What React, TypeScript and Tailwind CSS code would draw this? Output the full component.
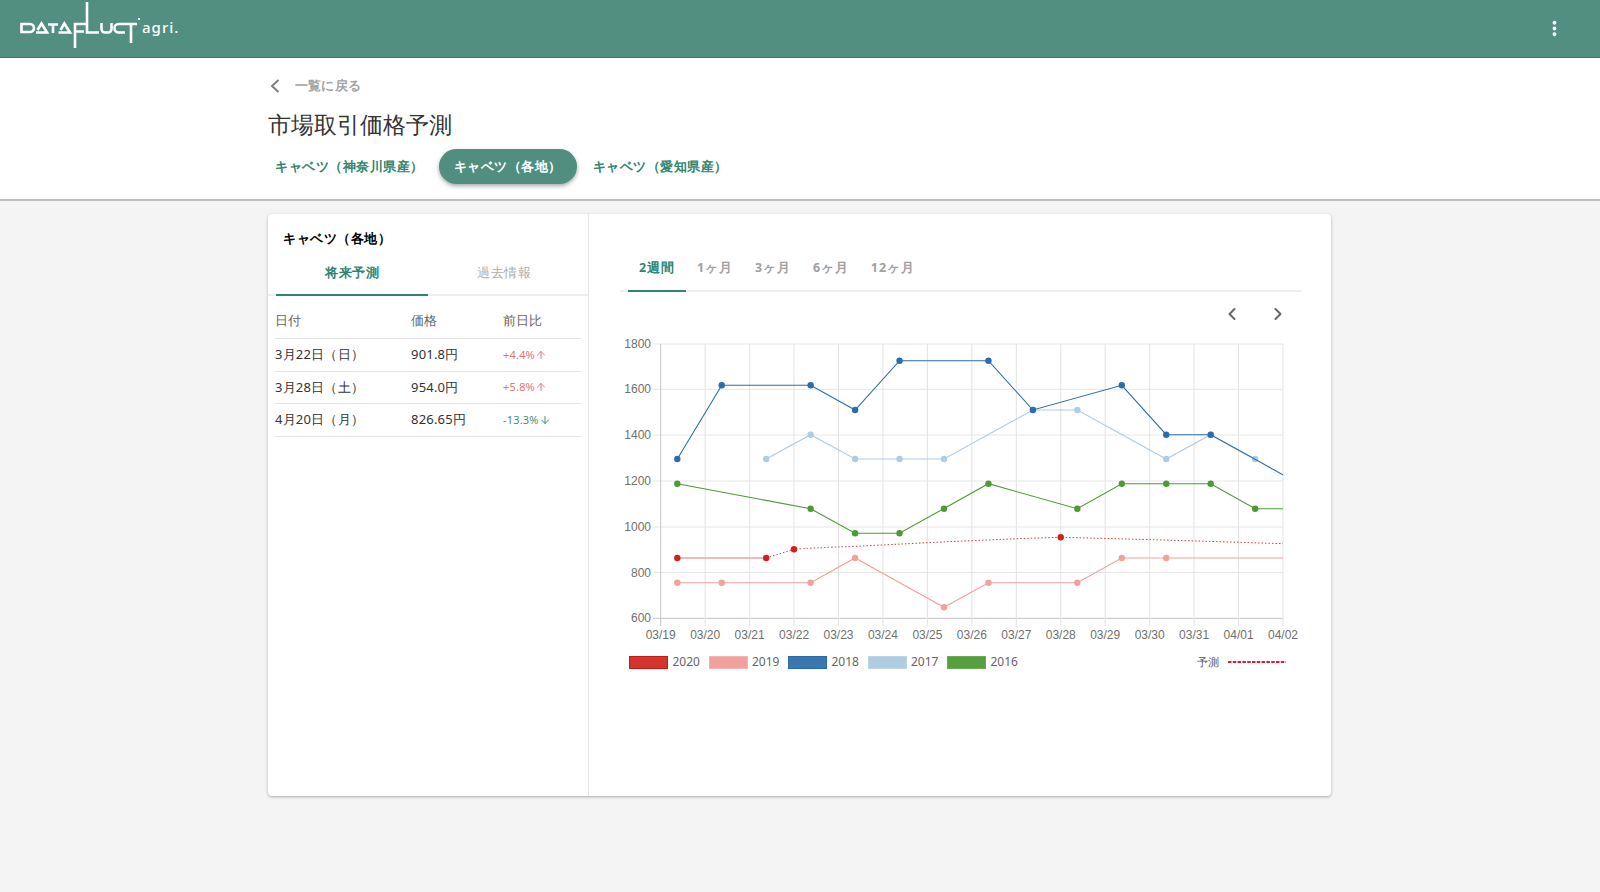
import React from "react";
import { ArrowDown, ArrowUp, ChevronLeft, ChevronRight } from "lucide-react";

type Pt = [number, number];

// page coordinates are used for the chart, see the viewBox on the svg
const stepX = 44.45;
const px = (i: number) => 677.3 + stepX * i;

const series: { color: string; line: Pt[]; dots: Pt[] }[] = [
  {
    color: "#aecde2",
    line: [[px(2), 459], [px(3), 434.7], [px(4), 459], [px(6), 459], [px(8), 410], [px(9), 410], [px(11), 459], [px(12), 434.7], [px(13), 459]],
    dots: [[px(2), 459], [px(3), 434.7], [px(4), 459], [px(5), 459], [px(6), 459], [px(8), 410], [px(9), 410], [px(11), 459], [px(12), 434.7], [px(13), 459]],
  },
  {
    color: "#2b6cab",
    line: [[px(0), 459], [px(1), 385.3], [px(3), 385.3], [px(4), 410], [px(5), 360.7], [px(7), 360.7], [px(8), 410], [px(10), 385.3], [px(11), 434.7], [px(12), 434.7], [px(14), 484]],
    dots: [[px(0), 459], [px(1), 385.3], [px(3), 385.3], [px(4), 410], [px(5), 360.7], [px(7), 360.7], [px(8), 410], [px(10), 385.3], [px(11), 434.7], [px(12), 434.7]],
  },
  {
    color: "#4c9b33",
    line: [[px(0), 483.7], [px(3), 508.7], [px(4), 533.3], [px(5), 533.3], [px(7), 483.7], [px(9), 508.7], [px(10), 483.7], [px(12), 483.7], [px(13), 508.7], [1283, 508.7]],
    dots: [[px(0), 483.7], [px(3), 508.7], [px(4), 533.3], [px(5), 533.3], [px(6), 508.7], [px(7), 483.7], [px(9), 508.7], [px(10), 483.7], [px(11), 483.7], [px(12), 483.7], [px(13), 508.7]],
  },
  {
    color: "#f2a19d",
    line: [[px(0), 582.7], [px(3), 582.7], [px(4), 558], [px(6), 607.3], [px(7), 582.7], [px(9), 582.7], [px(10), 558], [1283, 558]],
    dots: [[px(0), 582.7], [px(1), 582.7], [px(3), 582.7], [px(4), 558], [px(6), 607.3], [px(7), 582.7], [px(9), 582.7], [px(10), 558], [px(11), 558]],
  },
  {
    color: "#e8a3a3",
    line: [[px(0), 558], [px(2), 558]],
    dots: [],
  },
];

const redDots: Pt[] = [[px(0), 558], [px(2), 558], [794, 549.3], [1060.7, 537.3]];

const yTicks: [string, number][] = [
  ["1800", 344],
  ["1600", 389.3],
  ["1400", 435],
  ["1200", 481],
  ["1000", 527],
  ["800", 572.5],
  ["600", 618.3],
];

const xLabels = ["03/19", "03/20", "03/21", "03/22", "03/23", "03/24", "03/25", "03/26", "03/27", "03/28", "03/29", "03/30", "03/31", "04/01", "04/02"];

const legend = [
  { year: "2020", box: "bg-[#d4352c] border-[#c8181a]" },
  { year: "2019", box: "bg-[#f2a09c] border-[#f4b4b0]" },
  { year: "2018", box: "bg-[#3b76ad] border-[#2a6cab]" },
  { year: "2017", box: "bg-[#aecde1] border-[#bcd6e8]" },
  { year: "2016", box: "bg-[#559f3e] border-[#6aab55]" },
];

const rows = [
  { date: "3月22日（日）", price: "901.8円", diff: "+4.4%", up: true },
  { date: "3月28日（土）", price: "954.0円", diff: "+5.8%", up: true },
  { date: "4月20日（月）", price: "826.65円", diff: "-13.3%", up: false },
];

const Logo = () => (
  <svg width="124" height="58" viewBox="15 0 124 58" fill="none" stroke="white" strokeWidth="2.6" className="ml-[15px]">
    <path d="M21.5 32V24H30a4 4 0 0 1 0 8Z" />
    <path d="M36 32.5H47L41.5 23.5L37.5 30" />
    <path d="M48 24.5H58M53 24.5V33" />
    <path d="M58.5 32.5H70L64.3 23.5L60.5 30" />
    <path d="M75 48V24H87M75 31.5H84" />
    <path d="M87 2V32.5H99" />
    <path d="M101.500 23V29a3.500 3.500 0 0 0 3.500 3.500H108a3.500 3.500 0 0 0 3.500-3.500V23" />
    <path d="M125 24H118.500a4 4 0 0 0-4 4V28.500a4 4 0 0 0 4 4H125" />
    <path d="M125 24H137M131 24V43" />
  </svg>
);

const Chart = () => (
  <svg width="680" height="316" viewBox="620 330 680 316" className="block">
    {yTicks.map(([label, y]) => (
      <g key={label}>
        <line x1="653" x2="1283" y1={y} y2={y} stroke={y === 618.3 ? "#c4c4c4" : "#e6e6e6"} />
        <text x="651" y={y + 4} textAnchor="end" fontSize="12" fill="#707070" fontFamily="Liberation Sans, sans-serif">
          {label}
        </text>
      </g>
    ))}
    {xLabels.map((label, i) => {
      const x = 660.7 + stepX * i;
      return (
        <g key={label}>
          <line x1={x} x2={x} y1="344" y2="626" stroke={i === 0 ? "#c4c4c4" : "#e3e3e3"} />
          <text x={x} y="639" textAnchor="middle" fontSize="12" fill="#707070" fontFamily="Liberation Sans, sans-serif">
            {label}
          </text>
        </g>
      );
    })}
    <svg x="620" y="330" width="663" height="316" viewBox="620 330 663 316">
      {series.map((s, n) => (
        <g key={n}>
          <polyline points={s.line.map((p) => p.join(",")).join(" ")} fill="none" stroke={s.color} strokeWidth={n === 4 ? 1.6 : 1.1} />
          {s.dots.map((p, i) => (
            <circle key={i} cx={p[0]} cy={p[1]} r="3.2" fill={s.color} />
          ))}
        </g>
      ))}
      <path
        d="M766.3 558L794 549.3Q810 547.8 855 546.4C930 542.5 1000 539 1060.7 537.3C1130 539 1200 541 1283 543.700"
        fill="none"
        stroke="#dc3a3a"
        strokeWidth="1"
        strokeDasharray="1.5 2"
      />
      {redDots.map((p, i) => (
        <circle key={i} cx={p[0]} cy={p[1]} r="3.2" fill="#d41f1f" />
      ))}
    </svg>
  </svg>
);

export default function App() {
  return (
    <div className="min-h-[892px] bg-[#f4f4f4] font-['Roboto','Noto_Sans_CJK_JP',sans-serif]">
      <header className="flex h-[58px] items-center justify-between border-b border-[#2f7d6b] bg-[#528f80] pr-[34px]">
        <div className="flex items-center">
          <Logo />
          <span className="relative ml-[3px] mt-[-2px] text-[15px] font-medium tracking-[1px] text-white before:absolute before:left-[-4px] before:top-[2px] before:h-[2px] before:w-[2px] before:bg-white">
            agri.
          </span>
        </div>
        <svg width="23" height="23" viewBox="0 0 24 24" fill="white">
          <path d="M12 8c1.100 0 2-.9 2-2s-.9-2-2-2-2 .9-2 2 .9 2 2 2zm0 2c-1.100 0-2 .9-2 2s.9 2 2 2 2-.9 2-2-.9-2-2-2zm0 6c-1.100 0-2 .9-2 2s.9 2 2 2 2-.9 2-2-.9-2-2-2z" />
        </svg>
      </header>

      <div className="h-[143px] border-b-2 border-[#bdbdbd] bg-white pl-[268px]">
        <div className="flex h-[56px] items-center text-[13px] font-bold tracking-[0.2px] text-[#a3a3a3]">
          <svg width="10" height="14" viewBox="0 0 10 14" fill="none" stroke="#808080" strokeWidth="2" className="ml-[2px]">
            <path d="M8.500 1L2 7L8.500 13" />
          </svg>
          <span className="ml-[15px]">一覧に戻る</span>
        </div>
        <h1 className="mt-[-2px] h-[24px] text-[23px] font-light leading-[24px] text-[#333]">市場取引価格予測</h1>
        <div className="mt-[13px] flex items-center gap-[8px] text-[13px] font-bold tracking-[0.5px]">
          <button className="h-[35px] px-[7px] text-[#2f8570]">キャベツ（神奈川県産）</button>
          <button className="h-[35px] rounded-full bg-[#508e7f] px-[15px] text-white shadow-[0_2px_4px_rgba(0,0,0,0.35)]">キャベツ（各地）</button>
          <button className="h-[35px] px-2 text-[#2f8570]">キャベツ（愛知県産）</button>
        </div>
      </div>

      <main className="ml-[268px] mt-[13px] flex h-[582px] w-[1063px] rounded bg-white shadow-[0_1px_3px_rgba(0,0,0,0.3)]">
        <section className="w-[321px] border-r border-[#e6e6e6]">
          <h2 className="pl-[15px] pt-[15px] text-[13px] font-bold leading-[18px] tracking-[0.5px] text-black">キャベツ（各地）</h2>
          <div className="mt-[3px] flex h-[46px] border-b-2 border-[#eeeeee] px-[8px] text-[13px] tracking-[0.5px]">
            <div className="flex h-[46px] w-[152px] items-center justify-center border-b-2 border-[#2f8570] pt-[1px] font-bold text-[#2f8570]">将来予測</div>
            <div className="flex h-[46px] w-[152px] items-center justify-center text-[#adadad]">過去情報</div>
          </div>
          <div className="pl-[7px] pr-[7px]">
            <div className="flex h-[43px] items-center border-b border-[#e4e4e4] pt-[7px] text-[13px] text-[#666]">
              <span className="w-[136px]">日付</span>
              <span className="w-[92px]">価格</span>
              <span>前日比</span>
            </div>
            {rows.map((r) => (
              <div key={r.date} className="flex h-[32.6px] items-center border-b border-[#e4e4e4] text-[13px] tracking-[0.2px] text-[#333]">
                <span className="w-[136px]">{r.date}</span>
                <span className="w-[92px]">{r.price}</span>
                <span className={`flex items-center text-[11px] ${r.up ? "text-[#e57373]" : "text-[#3f8f7b]"}`}>
                  {r.diff}
                  {r.up ? <ArrowUp size={12} /> : <ArrowDown size={12} />}
                </span>
              </div>
            ))}
          </div>
        </section>

        <section className="flex-1 pl-[31px] pt-[31px]">
          <div className="flex h-[47px] w-[681px] border-b-2 border-[#eeeeee] pl-[8px] text-[12.5px] font-bold tracking-[1px] text-[#a0a0a0]">
            <div className="flex h-[47px] w-[58px] items-center justify-center border-b-2 border-[#2f8570] pt-[1px] text-[#2f8570]">2週間</div>
            <div className="flex h-[45px] w-[58px] items-center justify-center pt-[2px]">1ヶ月</div>
            <div className="flex h-[45px] w-[58px] items-center justify-center pt-[2px]">3ヶ月</div>
            <div className="flex h-[45px] w-[58px] items-center justify-center pt-[2px]">6ヶ月</div>
            <div className="flex h-[45px] w-[66px] items-center justify-center pt-[2px]">12ヶ月</div>
          </div>
          <div className="flex h-[38px] w-[668px] items-center justify-end gap-[26px] pt-[6px] text-[#666]">
            <ChevronLeft size={20} strokeWidth={2.4} />
            <ChevronRight size={20} strokeWidth={2.4} />
          </div>
          <Chart />
          <div className="mt-[6px] flex h-[20px] w-[666px] items-center justify-between pl-[9px] font-['Liberation_Sans',sans-serif] text-[12px] text-[#666]">
            <div className="flex items-center gap-[10px]">
              {legend.map((l) => (
                <div key={l.year} className="flex items-center gap-[4.500px]">
                  <span className={`h-[13px] w-[39px] border ${l.box}`} />
                  <span className="w-[26px]">{l.year}</span>
                </div>
              ))}
            </div>
            <div className="flex items-center gap-[9px] font-['Noto_Sans_CJK_JP',sans-serif] text-[11px] text-[#555]">
              予測
              <svg width="58" height="2" className="block">
                <line x1="0" x2="58" y1="1" y2="1" stroke="#d8203a" strokeWidth="2" strokeDasharray="3.500 1.300" />
              </svg>
            </div>
          </div>
        </section>
      </main>
    </div>
  );
}
